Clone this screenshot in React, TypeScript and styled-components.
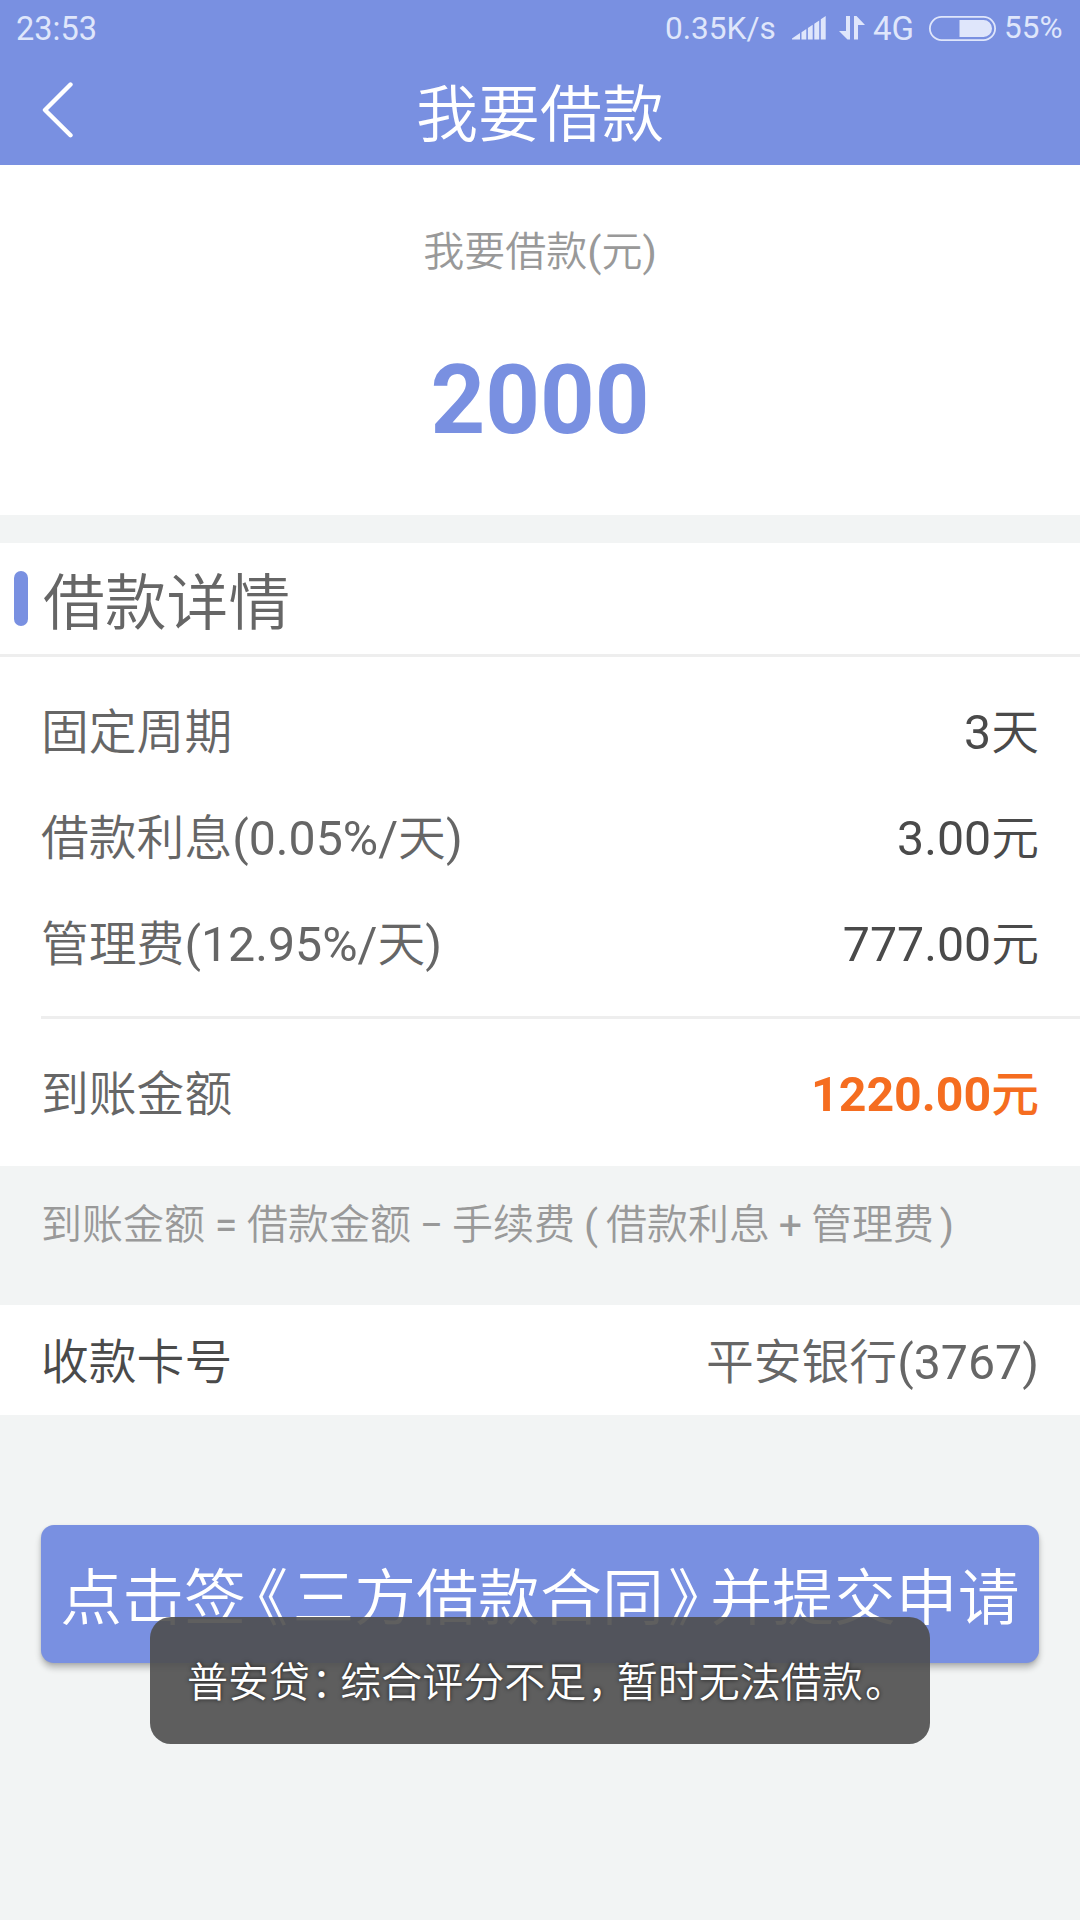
import React from "react";
import styled, { createGlobalStyle } from "styled-components";

const BLUE = "#7990e1";
const STATUS = "#dfe6fb";
const CJK = `Roboto, "Noto Sans CJK SC", sans-serif`;

const GlobalStyle = createGlobalStyle`
  * { box-sizing: border-box; }
  body { margin: 0; background: #f2f4f4; }
`;

const Screen = styled.div`
  position: relative;
  display: flex;
  flex-direction: column;
  width: 1080px;
  height: 1920px;
  overflow: hidden;
  background: #f2f4f4;
  font-family: ${CJK};
  font-weight: 350;
  white-space: nowrap;
`;

const Header = styled.header`
  height: 165px;
  background: ${BLUE};
`;

const StatusBar = styled.div`
  display: flex;
  align-items: center;
  justify-content: space-between;
  height: 56px;
  padding: 0 17px 0 16px;
  color: ${STATUS};
`;

const StatusGroup = styled.div`
  display: flex;
  align-items: center;
`;

const StatusText = styled.span<{ $size: number; $width: number; $gap: number; $drop?: number }>`
  width: ${(p) => p.$width}px;
  margin-right: ${(p) => p.$gap}px;
  padding-top: ${(p) => p.$drop ?? 0}px;
  font-size: ${(p) => p.$size}px;
  font-weight: 400;
  line-height: 56px;
`;

const StatusIcon = styled.svg<{ $gap: number }>`
  display: block;
  margin-right: ${(p) => p.$gap}px;
`;

const NavBar = styled.div`
  display: grid;
  grid-template-columns: 200px 1fr 200px;
  align-items: center;
  height: 109px;
`;

const BackButton = styled.button`
  display: flex;
  width: 100px;
  height: 108px;
  padding: 25px 0 0 42px;
  border: 0;
  background: none;
`;

const NavTitle = styled.h1`
  margin: 0;
  padding-top: 10px;
  color: #fff;
  font-size: 62px;
  font-weight: 350;
  line-height: 99px;
  text-align: center;
`;

const AmountPanel = styled.section`
  display: flex;
  flex-direction: column;
  align-items: center;
  height: 350px;
  padding-top: 57px;
  background: #fff;
`;

const AmountLabel = styled.div`
  height: 60px;
  color: #999;
  font-size: 41px;
  line-height: 60px;
`;

const Amount = styled.div`
  margin-top: 62px;
  color: ${BLUE};
  font-size: 95.5px;
  font-weight: 700;
  line-height: 112px;
`;

const DetailPanel = styled.section`
  height: 623px;
  margin-top: 28px;
  background: #fff;
`;

const SectionHead = styled.div`
  display: flex;
  align-items: center;
  gap: 15px;
  height: 114px;
  padding: 0 14px;
  border-bottom: 3px solid #eee;
`;

const Marker = styled.i`
  width: 14px;
  height: 55px;
  border-radius: 7px;
  background: ${BLUE};
`;

const SectionTitle = styled.h2`
  margin: 0;
  padding-top: 10px;
  color: #666;
  font-size: 61.8px;
  font-weight: 350;
  line-height: 100px;
`;

const Rows = styled.div`
  padding-top: 19px;
`;

const Row = styled.div<{ $height: number; $lift?: number }>`
  display: flex;
  align-items: center;
  justify-content: space-between;
  height: ${(p) => p.$height}px;
  padding: 0 41px ${(p) => p.$lift ?? 0}px;
  font-size: 47.8px;
`;

const Label = styled.span<{ $dark?: boolean }>`
  color: ${(p) => (p.$dark ? "#4a4a4a" : "#666")};
`;

const Value = styled.span<{ $color?: string; $bold?: boolean }>`
  color: ${(p) => p.$color ?? "#4a4a4a"};
  font-weight: ${(p) => (p.$bold ? 500 : 350)};
`;

const Num = styled.span<{ $weight?: number }>`
  font-size: 1.01em;
  font-weight: ${(p) => p.$weight ?? 400};
`;

const Divider = styled.div`
  height: 3px;
  margin: 22px 0 0 41px;
  background: #eee;
`;

const Formula = styled.p`
  height: 139px;
  margin: 0;
  padding-left: 41px;
  color: #999;
  font-size: 41px;
  line-height: 119px;
`;

const Op = styled.span<{ $width: number; $indent?: number }>`
  display: inline-block;
  width: ${(p) => p.$width}px;
  padding-left: ${(p) => p.$indent ?? 0}px;
  font-weight: 400;
  text-align: center;
`;

const CardPanel = styled.section`
  background: #fff;
`;

const SubmitButton = styled.button`
  height: 138px;
  margin: 110px 41px 0;
  padding: 10px 0 0;
  border: 0;
  border-radius: 13px;
  background: ${BLUE};
  box-shadow: 0 5px 6px rgba(0, 0, 0, 0.24), 0 1px 3px rgba(0, 0, 0, 0.1);
  color: #fff;
  font-family: ${CJK};
  font-size: 61.9px;
  font-weight: 350;
  line-height: 128px;
  white-space: nowrap;
`;

const Punct = styled.span<{ $before: number; $after: number }>`
  margin-left: ${(p) => p.$before}em;
  margin-right: ${(p) => p.$after}em;
  font-feature-settings: "halt";
`;

const Toast = styled.div`
  position: absolute;
  top: 1617px;
  left: 150px;
  width: 780px;
  height: 127px;
  padding-left: 37px;
  border-radius: 21px;
  background: rgba(78, 78, 78, 0.9);
  color: #fff;
  font-size: 41px;
  line-height: 133px;
  text-shadow: 0 0 4px rgba(0, 0, 0, 0.7);
`;

export default function App() {
  return (
    <Screen>
      <GlobalStyle />
      <Header>
        <StatusBar>
          <StatusText $size={32.5} $width={90} $gap={0} $drop={2}>23:53</StatusText>
          <StatusGroup>
            <StatusText $size={31.6} $width={111} $gap={16} $drop={1}>0.35K/s</StatusText>
            <StatusIcon $gap={13} width="34" height="24" viewBox="0 0 34 24" fill={STATUS}>
              <path d="M0 23.5V22.5L8 17V23.5ZM9.5 16.2L14.3 13V23.5H9.5ZM15.9 12L20.7 8.7V23.5H15.9ZM22.3 7.7L27.2 4.4V23.5H22.3ZM28.8 3.3L33.7 0V23.5H28.8Z" />
            </StatusIcon>
            <StatusIcon $gap={8} width="26" height="24" viewBox="0 0 26 24" fill={STATUS}>
              <path d="M7 0H11V23.5H8.5L0 15H7ZM15 0H17.5L26 9H19V23.5H15Z" />
            </StatusIcon>
            <StatusText $size={33} $width={42} $gap={14} $drop={2}>4G</StatusText>
            <StatusIcon $gap={8} width="67" height="25" viewBox="0 0 67 25">
              <rect x="0.9" y="0.9" width="65.2" height="23.2" rx="11.6" fill="none" stroke={STATUS} strokeWidth="1.8" />
              <path d="M30.5 4H54.5A8.5 8.5 0 0 1 54.5 21H30.5Z" fill={STATUS} />
            </StatusIcon>
            <StatusText $size={31.5} $width={59} $gap={0}>55%</StatusText>
          </StatusGroup>
        </StatusBar>
        <NavBar>
          <BackButton aria-label="返回">
            <svg width="32" height="56" viewBox="0 0 32 56" fill="none" stroke="#fff" strokeWidth="4.4" strokeLinecap="round" strokeLinejoin="round">
              <path d="M28.5 2.5L3 28L28.5 53.2" />
            </svg>
          </BackButton>
          <NavTitle>我要借款</NavTitle>
        </NavBar>
      </Header>

      <AmountPanel>
        <AmountLabel>我要借款<Num>(</Num>元<Num>)</Num></AmountLabel>
        <Amount>2000</Amount>
      </AmountPanel>

      <DetailPanel>
        <SectionHead>
          <Marker />
          <SectionTitle>借款详情</SectionTitle>
        </SectionHead>
        <Rows>
          <Row $height={106} $lift={1}>
            <Label>固定周期</Label>
            <Value><Num>3</Num>天</Value>
          </Row>
          <Row $height={106} $lift={1}>
            <Label>借款利息<Num>(0.05%/</Num>天<Num>)</Num></Label>
            <Value><Num>3.00</Num>元</Value>
          </Row>
          <Row $height={106} $lift={1}>
            <Label>管理费<Num>(12.95%/</Num>天<Num>)</Num></Label>
            <Value><Num>777.00</Num>元</Value>
          </Row>
        </Rows>
        <Divider />
        <Row $height={147} $lift={4}>
          <Label>到账金额</Label>
          <Value $color="#f56d20" $bold><Num $weight={700}>1220.00</Num>元</Value>
        </Row>
      </DetailPanel>

      <Formula>
        到账金额<Op $width={42}>=</Op>借款金额<Op $width={41}>−</Op>手续费
        <Op $width={31} $indent={1}>(</Op>借款利息<Op $width={41}>+</Op>管理费<Op $width={26}>)</Op>
      </Formula>

      <CardPanel>
        <Row $height={110} $lift={3}>
          <Label $dark>收款卡号</Label>
          <Value $color="#666">平安银行<Num>(3767)</Num></Value>
        </Row>
      </CardPanel>

      <SubmitButton>
        点击签<Punct $before={0.18} $after={0.07}>《</Punct>三方借款合同<Punct $before={0.07} $after={0.18}>》</Punct>并提交申请
      </SubmitButton>

      <Toast>
        普安贷<Punct $before={0.03} $after={0.21}>：</Punct>综合评分不足<Punct $before={0.03} $after={0.21}>，</Punct>暂时无法借款<Punct $before={0.06} $after={0.18}>。</Punct>
      </Toast>
    </Screen>
  );
}
